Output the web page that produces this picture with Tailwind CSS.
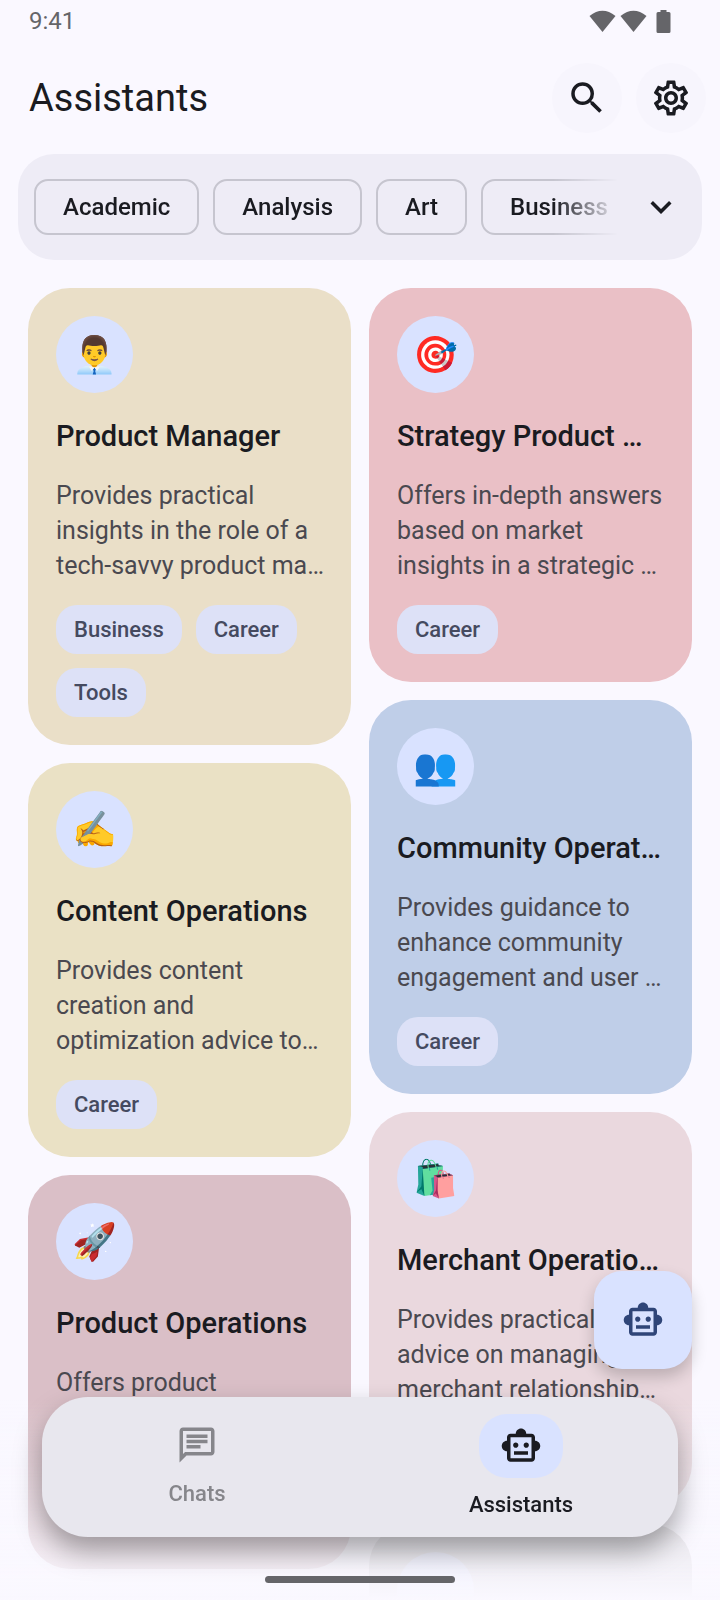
<!DOCTYPE html>
<html lang="en">
<head>
  <meta charset="UTF-8">
  <meta name="viewport" content="width=device-width, initial-scale=1.0">
  <title>Assistants</title>
  <script src="https://cdn.jsdelivr.net/npm/@tailwindcss/browser@4"></script>
</head>
<body class="h-screen overflow-hidden flex flex-col bg-[#faf8ff] font-[Roboto,sans-serif] text-[#1a1b21] antialiased">

  <!-- Status Bar -->
  <div class="h-[42px] shrink-0 flex items-center justify-between pl-[29px] pr-[49px] text-[#656569]">
    <span class="text-[24px] leading-[42px]">9:41</span>
    <div class="flex items-center">
      <svg class="w-[27px] h-[23px] mr-1" viewBox="0 0 27 23" fill="currentColor"><path d="M.5 6Q13.500-4.500 26.500 6L13.500 22z"/></svg>
      <svg class="w-[27px] h-[23px] mr-[9px]" viewBox="0 0 27 23" fill="currentColor"><path d="M.5 6Q13.500-4.500 26.500 6L13.500 22z"/></svg>
      <svg class="w-[15px] h-[23px]" viewBox="0 0 15 23" fill="currentColor"><path d="M4.500 0h6v2H13a1.500 1.500 0 0 1 1.500 1.500v18A1.500 1.500 0 0 1 13 23H2A1.500 1.500 0 0 1 .5 21.500v-18A1.500 1.500 0 0 1 2 2h2.500z"/></svg>
    </div>
  </div>

  <!-- Header -->
  <header class="shrink-0 flex items-center gap-[14px] py-[21px] pl-[29px] pr-[14px]">
    <h1 class="flex-1 text-[38px] leading-[48px]">Assistants</h1>
    <button type="button" aria-label="Search" class="size-[70px] rounded-full bg-[#f7f5fd] flex items-center justify-center">
      <svg class="size-[42px]" viewBox="0 0 24 24" fill="currentColor"><path d="M15.500 14h-.79l-.28-.27A6.471 6.471 0 0 0 16 9.500 6.500 6.500 0 1 0 9.500 16c1.610 0 3.090-.59 4.230-1.570l.27.28v.79l5 4.990L20.490 19l-4.990-5zm-6 0C7.010 14 5 11.990 5 9.500S7.010 5 9.500 5 14 7.010 14 9.500 11.990 14 9.500 14z"/></svg>
    </button>
    <button type="button" aria-label="Settings" class="size-[70px] rounded-full bg-[#f7f5fd] flex items-center justify-center">
      <svg class="size-[42px]" viewBox="0 0 24 24" fill="currentColor"><path d="M19.43 12.98c.04-.32.07-.64.07-.98 0-.34-.03-.66-.07-.98l2.110-1.650c.19-.15.24-.42.12-.64l-2-3.460c-.09-.16-.26-.25-.44-.25-.06 0-.12.01-.17.03l-2.490 1c-.52-.4-1.080-.73-1.690-.98l-.38-2.650C14.46 2.180 14.25 2 14 2h-4c-.25 0-.46.18-.49.42l-.38 2.650c-.61.25-1.170.59-1.690.98l-2.490-1c-.06-.02-.12-.03-.18-.03-.17 0-.34.09-.43.25l-2 3.460c-.13.22-.07.49.12.64l2.110 1.650c-.04.32-.07.65-.07.98 0 .33.03.66.07.98l-2.110 1.650c-.19.15-.24.42-.12.64l2 3.460c.09.16.26.25.44.25.06 0 .12-.01.17-.03l2.490-1c.52.4 1.080.73 1.690.98l.38 2.650c.03.24.24.42.49.42h4c.25 0 .46-.18.49-.42l.38-2.650c.61-.25 1.170-.59 1.690-.98l2.490 1c.06.02.12.03.18.03.17 0 .34-.09.43-.25l2-3.460c.12-.22.07-.49-.12-.64l-2.110-1.650zm-1.980-1.710c.04.31.05.52.05.73 0 .21-.02.43-.05.73l-.14 1.130.89.7 1.080.84-.7 1.210-1.270-.51-1.040-.42-.9.68c-.43.32-.84.56-1.250.73l-1.060.43-.16 1.130-.2 1.350h-1.400l-.19-1.350-.16-1.130-1.060-.43c-.43-.18-.83-.41-1.230-.71l-.91-.7-1.060.43-1.270.51-.7-1.210 1.080-.84.89-.7-.14-1.130c-.03-.31-.05-.54-.05-.74s.02-.43.05-.73l.14-1.130-.89-.7-1.080-.84.7-1.210 1.270.51 1.040.42.9-.68c.43-.32.84-.56 1.250-.73l1.060-.43.16-1.130.2-1.350h1.390l.19 1.350.16 1.130 1.060.43c.43.18.83.41 1.230.71l.91.7 1.060-.43 1.270-.51.7 1.210-1.070.85-.89.7.14 1.130zM12 8c-2.210 0-4 1.790-4 4s1.790 4 4 4 4-1.790 4-4-1.790-4-4-4zm0 6c-1.100 0-2-.9-2-2s.9-2 2-2 2 .9 2 2-.9 2-2 2z"/></svg>
    </button>
  </header>

  <!-- Category Filter -->
  <div class="shrink-0 mx-[18px] py-[25px] pl-4 pr-5 flex items-center rounded-[36px] bg-[#eeecf6]">
    <div class="flex-1 min-w-0 overflow-hidden flex gap-[14px] text-[24px] font-medium [mask-image:linear-gradient(to_right,black_89%,transparent)]">
      <button type="button" class="shrink-0 h-14 px-[27px] rounded-[14px] border-2 border-[#c6c5cf]">Academic</button>
      <button type="button" class="shrink-0 h-14 px-[27px] rounded-[14px] border-2 border-[#c6c5cf]">Analysis</button>
      <button type="button" class="shrink-0 h-14 px-[27px] rounded-[14px] border-2 border-[#c6c5cf]">Art</button>
      <button type="button" class="shrink-0 h-14 px-[27px] rounded-[14px] border-2 border-[#c6c5cf]">Business</button>
    </div>
    <button type="button" aria-label="Show all categories" class="ml-[22px] size-[42px] flex items-center justify-center">
      <svg class="size-[42px]" viewBox="0 0 24 24" fill="currentColor"><path d="M16.590 8.590 12 13.170 7.410 8.590 6 10l6 6 6-6z"/></svg>
    </button>
  </div>

  <!-- Assistant Cards -->
  <main class="flex-1 min-h-0 overflow-hidden mt-7 px-7 grid grid-cols-2 gap-[18px] items-start">
    <div class="min-w-0 flex flex-col gap-[18px]">
      <article class="rounded-[42px] bg-[#eadfc8] p-7">
        <div class="size-[77px] rounded-full bg-[#d9e2ff] flex items-center justify-center text-[36px]">👨‍💼</div>
        <h2 class="mt-[22px] text-[29px] leading-[42px] font-medium truncate">Product Manager</h2>
        <p class="mt-[21px] text-[25px] leading-[35px] text-[#4a4950]">Provides practical insights in the role of a <span class="whitespace-nowrap">tech-savvy product ma…</span></p>
        <div class="mt-[22px] flex flex-wrap gap-[14px] text-[22px] font-medium text-[#454a60]">
          <span class="h-[49px] leading-[49px] px-[18px] rounded-[21px] bg-[#dde1f7]">Business</span>
          <span class="h-[49px] leading-[49px] px-[18px] rounded-[21px] bg-[#dde1f7]">Career</span>
          <span class="h-[49px] leading-[49px] px-[18px] rounded-[21px] bg-[#dde1f7]">Tools</span>
        </div>
      </article>

      <article class="rounded-[42px] bg-[#eae1c5] p-7">
        <div class="size-[77px] rounded-full bg-[#d9e2ff] flex items-center justify-center text-[36px]">✍️</div>
        <h2 class="mt-[22px] text-[29px] leading-[42px] font-medium truncate">Content Operations</h2>
        <p class="mt-[21px] text-[25px] leading-[35px] text-[#4a4950]">Provides content creation and optimization advice to…</p>
        <div class="mt-[22px] flex flex-wrap gap-[14px] text-[22px] font-medium text-[#454a60]">
          <span class="h-[49px] leading-[49px] px-[18px] rounded-[21px] bg-[#dde1f7]">Career</span>
        </div>
      </article>

      <article class="rounded-[42px] bg-[#dabfc7] p-7">
        <div class="size-[77px] rounded-full bg-[#d9e2ff] flex items-center justify-center text-[36px]">🚀</div>
        <h2 class="mt-[22px] text-[29px] leading-[42px] font-medium truncate">Product Operations</h2>
        <p class="mt-[21px] h-[105px] text-[25px] leading-[35px] text-[#4a4950]">Offers product</p>
        <div class="mt-[22px] h-[49px]"></div>
      </article>
    </div>

    <div class="min-w-0 flex flex-col gap-[18px]">
      <article class="rounded-[42px] bg-[#eac0c6] p-7">
        <div class="size-[77px] rounded-full bg-[#d9e2ff] flex items-center justify-center text-[36px]">🎯</div>
        <h2 class="mt-[22px] text-[29px] leading-[42px] font-medium truncate">Strategy Product …</h2>
        <p class="mt-[21px] text-[25px] leading-[35px] text-[#4a4950]">Offers in-depth answers based on market insights in a strategic …</p>
        <div class="mt-[22px] flex flex-wrap gap-[14px] text-[22px] font-medium text-[#454a60]">
          <span class="h-[49px] leading-[49px] px-[18px] rounded-[21px] bg-[#dde1f7]">Career</span>
        </div>
      </article>

      <article class="rounded-[42px] bg-[#bfcee8] p-7">
        <div class="size-[77px] rounded-full bg-[#d9e2ff] flex items-center justify-center text-[36px]">👥</div>
        <h2 class="mt-[22px] text-[29px] leading-[42px] font-medium truncate">Community Operat…</h2>
        <p class="mt-[21px] text-[25px] leading-[35px] text-[#4a4950]">Provides guidance to enhance community engagement and user …</p>
        <div class="mt-[22px] flex flex-wrap gap-[14px] text-[22px] font-medium text-[#454a60]">
          <span class="h-[49px] leading-[49px] px-[18px] rounded-[21px] bg-[#dde1f7]">Career</span>
        </div>
      </article>

      <article class="rounded-[42px] bg-[#ead8de] p-7">
        <div class="size-[77px] rounded-full bg-[#d9e2ff] flex items-center justify-center text-[36px]">🛍️</div>
        <h2 class="mt-[22px] text-[29px] leading-[42px] font-medium truncate">Merchant Operatio…</h2>
        <p class="mt-[21px] text-[25px] leading-[35px] text-[#4a4950]">Provides practical advice on managing merchant relationship…</p>
        <div class="mt-[22px] h-[49px]"></div>
      </article>

      <article class="rounded-[42px] bg-[#cfcdd0] p-7">
        <div class="size-[77px] rounded-full bg-[#d9e2ff]"></div>
      </article>
    </div>
  </main>

  <!-- Fade behind the navigation -->
  <div class="fixed inset-x-0 bottom-0 h-[200px] bg-linear-to-b from-[#faf8ff]/0 to-[#faf8ff] pointer-events-none"></div>

  <!-- New Assistant Button -->
  <button type="button" aria-label="New assistant" class="fixed right-7 bottom-[231px] size-[98px] rounded-[28px] bg-[#d9e2ff] text-[#2f4578] flex items-center justify-center shadow-[0_8px_16px_rgba(0,0,0,0.2)]">
    <svg class="size-[42px]" viewBox="0 0 24 24" fill="currentColor"><path d="M20 9V7c0-1.100-.9-2-2-2h-3c0-1.660-1.340-3-3-3S9 3.340 9 5H6c-1.100 0-2 .9-2 2v2c-1.660 0-3 1.340-3 3s1.340 3 3 3v4c0 1.100.9 2 2 2h12c1.100 0 2-.9 2-2v-4c1.660 0 3-1.340 3-3s-1.340-3-3-3zm-2 10H6V7h12v12zm-9-6c-.83 0-1.500-.67-1.500-1.500S8.170 10 9 10s1.500.67 1.500 1.500S9.830 13 9 13zm7.500-1.500c0 .83-.67 1.500-1.500 1.500s-1.500-.67-1.500-1.500.67-1.500 1.500-1.500 1.500.67 1.500 1.500zM8 15h8v2H8v-2z"/></svg>
  </button>

  <!-- Bottom Navigation -->
  <nav class="fixed inset-x-[42px] bottom-[63px] h-[140px] pr-0.5 pb-0.5 rounded-[46px] bg-[#e8e7ee] flex gap-[14px] text-[22px] leading-[28px] font-medium shadow-[0_14px_28px_rgba(0,0,0,0.35)]">
    <a href="#chats" class="flex-1 flex flex-col items-center justify-center gap-[14px] text-[#86868b]">
      <svg class="size-[42px]" viewBox="0 0 24 24" fill="currentColor"><path d="M4 4h16v12H5.170L4 17.170V4m0-2c-1.100 0-1.990.9-1.990 2L2 22l4-4h14c1.100 0 2-.9 2-2V4c0-1.100-.9-2-2-2H4zm2 10h8v2H6v-2zm0-3h12v2H6V9zm0-3h12v2H6V6z"/></svg>
      Chats
    </a>
    <a href="#assistants" aria-current="page" class="flex-1 flex flex-col items-center justify-center gap-[13px]">
      <span class="w-[84px] h-16 rounded-[28px] bg-[#d9e2ff] flex items-center justify-center">
        <svg class="size-[42px]" viewBox="0 0 24 24" fill="currentColor"><path d="M20 9V7c0-1.100-.9-2-2-2h-3c0-1.660-1.340-3-3-3S9 3.340 9 5H6c-1.100 0-2 .9-2 2v2c-1.660 0-3 1.340-3 3s1.340 3 3 3v4c0 1.100.9 2 2 2h12c1.100 0 2-.9 2-2v-4c1.660 0 3-1.340 3-3s-1.340-3-3-3zm-2 10H6V7h12v12zm-9-6c-.83 0-1.500-.67-1.500-1.500S8.170 10 9 10s1.500.67 1.500 1.500S9.830 13 9 13zm7.500-1.500c0 .83-.67 1.500-1.500 1.500s-1.500-.67-1.500-1.500.67-1.500 1.500-1.500 1.500.67 1.500 1.500zM8 15h8v2H8v-2z"/></svg>
      </span>
      Assistants
    </a>
  </nav>

  <!-- Gesture bar -->
  <div class="fixed inset-x-0 bottom-[17px] mx-auto w-[190px] h-[7px] rounded-full bg-[#656569]"></div>

</body>
</html>
